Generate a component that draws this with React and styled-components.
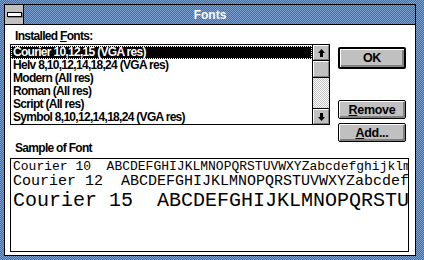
import React from 'react';
import styled, { createGlobalStyle, css } from 'styled-components';

const GlobalStyle = createGlobalStyle`
  html, body {
    margin: 0;
    padding: 0;
    background: #fff;
  }
  body {
    font-family: "Liberation Sans", Arial, sans-serif;
  }
`;

const systemFont = css`
  font-family: "Liberation Sans", Arial, sans-serif;
  font-weight: 700;
  font-size: 12px;
  letter-spacing: -0.7px;
`;

const dither = css`
  background: repeating-conic-gradient(#3d6ba9 0 25%, #7ea2d2 0 50%) 0 0 / 2px 2px;
`;

const greyDither = css`
  background: repeating-conic-gradient(#c0c0c0 0 25%, #ffffff 0 50%) 0 0 / 2px 2px;
`;

const Window = styled.div`
  ${dither};
  width: 424px;
  height: 260px;
  box-sizing: border-box;
  padding: 4px 8px 4px 4px;
  display: flex;
`;

const Frame = styled.div`
  flex: 1;
  border: 1px solid #000;
  display: flex;
  flex-direction: column;
  min-width: 0;
`;

const TitleBar = styled.div`
  ${dither};
  height: 19px;
  display: flex;
  align-items: center;
  border-bottom: 1px solid #000;
`;

const SysMenu = styled.div`
  width: 19px;
  height: 19px;
  box-sizing: border-box;
  background: #c0c0c0;
  border-right: 1px solid #000;
  display: flex;
  align-items: center;
  justify-content: center;
`;

const SysBar = styled.div`
  width: 13px;
  height: 3px;
  background: #fff;
  border: 1px solid #000;
  box-shadow: 1px 1px 0 #808080;
`;

const Title = styled.div`
  flex: 1;
  text-align: center;
  color: #fff;
  font-weight: 700;
  font-size: 12px;
  padding-right: 19px;
`;

const Client = styled.div`
  flex: 1;
  background: #fff;
  display: flex;
  flex-direction: column;
  padding: 4px 6px 3px 5px;
  min-height: 0;
`;

const Label = styled.div`
  ${systemFont};
  line-height: 14px;
  color: #000;
  padding-left: 5px;
  margin-top: ${p => p.$top || 0}px;
  margin-bottom: ${p => p.$gap || 1}px;
`;

const Key = styled.span`
  text-decoration: underline;
  text-underline-offset: 1px;
`;

const TopRow = styled.div`
  display: flex;
  gap: 8px;
`;

const LeftCol = styled.div`
  width: 320px;
  display: flex;
  flex-direction: column;
`;

const ListBox = styled.div`
  border: 1px solid #000;
  height: 79px;
  display: flex;
`;

const Items = styled.div`
  flex: 1;
  padding-top: 1px;
  overflow: hidden;
`;

const Item = styled.div`
  ${systemFont};
  height: 13px;
  line-height: 13px;
  padding-left: 2px;
  white-space: nowrap;
  color: ${p => (p.$selected ? '#fff' : '#000')};
  background: ${p => (p.$selected ? '#000' : 'transparent')};
  outline: ${p => (p.$selected ? '1px dotted #fff' : 'none')};
  outline-offset: -1px;
`;

const ScrollBar = styled.div`
  width: 16px;
  border-left: 1px solid #000;
  display: flex;
  flex-direction: column;
`;

const ArrowButton = styled.div`
  height: 15px;
  box-sizing: border-box;
  background: #c0c0c0;
  border-top: 1px solid #fff;
  border-left: 1px solid #fff;
  border-right: 1px solid #808080;
  border-bottom: 1px solid #808080;
  display: flex;
  align-items: center;
  justify-content: center;
  box-shadow: ${p => (p.$bottom ? '0 -1px 0 #000' : '0 1px 0 #000')};
`;

const Thumb = styled.div`
  height: 16px;
  margin-top: 1px;
  box-sizing: border-box;
  background: #c0c0c0;
  border-top: 1px solid #fff;
  border-left: 1px solid #fff;
  border-right: 1px solid #808080;
  border-bottom: 1px solid #808080;
  box-shadow: 0 1px 0 #000;
`;

const Track = styled.div`
  ${greyDither};
  flex: 1;
  margin-top: 1px;
  margin-bottom: 1px;
`;

const RightCol = styled.div`
  display: flex;
  flex-direction: column;
  padding-top: 18px;
  width: 68px;
`;

const Button = styled.div`
  ${systemFont};
  font-size: 12.5px;
  letter-spacing: -0.3px;
  height: ${p => (p.$default ? 22 : 19)}px;
  box-sizing: border-box;
  background: #c0c0c0;
  border: ${p => (p.$default ? 2 : 1)}px solid #000;
  border-radius: 2px;
  box-shadow: inset 1px 1px 0 #fff, inset -2px -2px 0 #808080;
  display: flex;
  align-items: center;
  justify-content: center;
  color: #000;
  margin: ${p => p.$margin || '0'};
`;

const SampleBox = styled.div`
  flex: 1;
  border: 1px solid #000;
  overflow: hidden;
  padding: 1px 0 0 2px;
  font-family: "Liberation Mono", "Courier New", monospace;
  color: #000;
`;

const SampleLine = styled.div`
  white-space: pre;
  font-size: ${p => p.$size}px;
  line-height: ${p => p.$line}px;
`;

const UpArrow = () => (
  <svg width="7" height="8" viewBox="0 0 7 8">
    <path d="M3.5 0 L7 4 L5 4 L5 8 L2 8 L2 4 L0 4 Z" fill="#000" />
  </svg>
);

const DownArrow = () => (
  <svg width="7" height="8" viewBox="0 0 7 8">
    <path d="M3.5 8 L7 4 L5 4 L5 0 L2 0 L2 4 L0 4 Z" fill="#000" />
  </svg>
);

const fonts = [
  'Courier 10,12,15 (VGA res)',
  'Helv 8,10,12,14,18,24 (VGA res)',
  'Modern (All res)',
  'Roman (All res)',
  'Script (All res)',
  'Symbol 8,10,12,14,18,24 (VGA res)',
];

const alphabet = 'ABCDEFGHIJKLMNOPQRSTUVWXYZabcdefghijklmnopqrstuvwxyz';

const samples = [
  { size: 13, line: 14, label: 'Courier 10' },
  { size: 15, line: 16, label: 'Courier 12' },
  { size: 20, line: 22, label: 'Courier 15' },
];

export default function App() {
  return (
    <>
      <GlobalStyle />
      <Window>
        <Frame>
          <TitleBar>
            <SysMenu>
              <SysBar />
            </SysMenu>
            <Title>Fonts</Title>
          </TitleBar>
          <Client>
            <TopRow>
              <LeftCol>
                <Label $gap={1}>
                  Installed <Key>F</Key>onts:
                </Label>
                <ListBox>
                  <Items>
                    {fonts.map((f, i) => (
                      <Item key={f} $selected={i === 0}>{f}</Item>
                    ))}
                  </Items>
                  <ScrollBar>
                    <ArrowButton><UpArrow /></ArrowButton>
                    <Thumb />
                    <Track />
                    <ArrowButton $bottom><DownArrow /></ArrowButton>
                  </ScrollBar>
                </ListBox>
              </LeftCol>
              <RightCol>
                <Button $default>OK</Button>
                <Button $margin="31px 0 4px">
                  <span><Key>R</Key>emove</span>
                </Button>
                <Button>
                  <span><Key>A</Key>dd...</span>
                </Button>
              </RightCol>
            </TopRow>
            <Label $top={-1} $gap={3}>Sample of Font</Label>
            <SampleBox>
              {samples.map(s => (
                <SampleLine key={s.label} $size={s.size} $line={s.line}>
                  {`${s.label}  ${alphabet}`}
                </SampleLine>
              ))}
            </SampleBox>
          </Client>
        </Frame>
      </Window>
    </>
  );
}
